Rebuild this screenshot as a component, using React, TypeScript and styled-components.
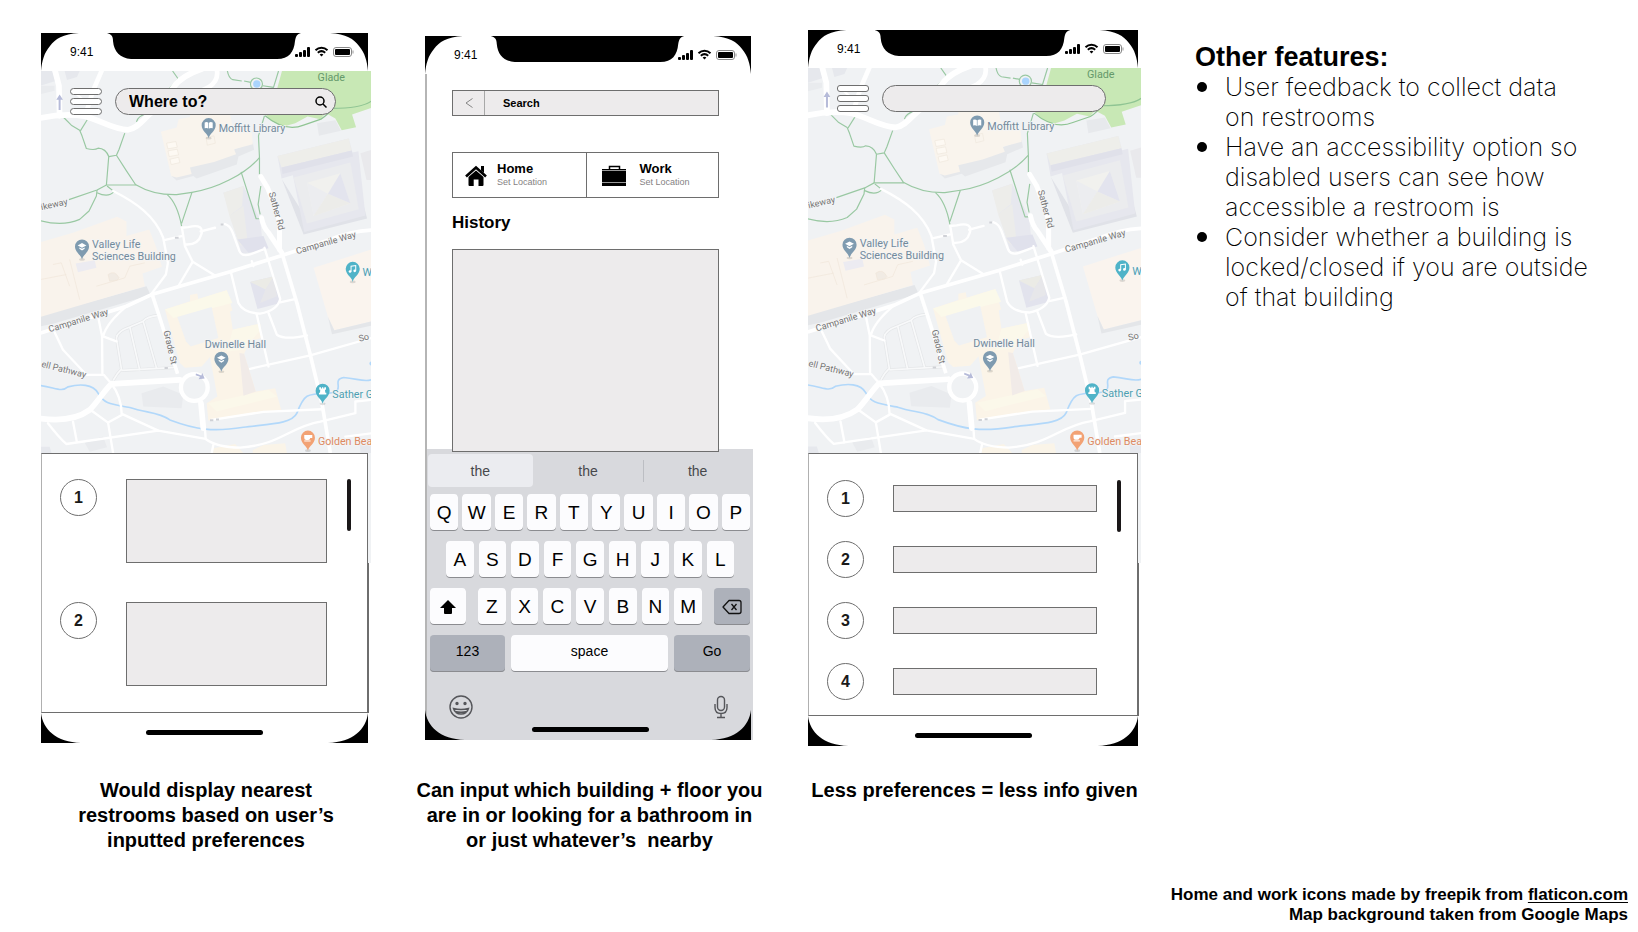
import React from "react";
import styled, { createGlobalStyle } from "styled-components";

const GlobalStyle = createGlobalStyle`
  *, *::before, *::after { box-sizing: border-box; }
  body { margin: 0; background: #fff; color: #000; font-family: "Liberation Sans", Arial, sans-serif; }
  h1, h2, p, ul, ol, figure { margin: 0; padding: 0; }
  ul, ol { list-style: none; }
  button, input { font: inherit; color: inherit; border: 0; margin: 0; padding: 0; border-radius: 0; background: none; }
`;

const line = "#6e6e6e";
const fill = "#edebec";

/* ---------- page ---------- */

const Page = styled.main`
  display: flex;
  flex-direction: column;
  min-height: 100vh;
  padding: 30px 10px 7px 41px;
`;

const Board = styled.div`
  display: grid;
  grid-template-columns: minmax(0, 330fr) minmax(0, 329fr) minmax(0, 333fr) minmax(0, 433fr);
  grid-template-rows: auto auto;
  column-gap: 54px;
  row-gap: 32px;
`;

const Screen = styled.figure`
  display: grid;
  grid-template-columns: minmax(0, 1fr);
  grid-template-rows: subgrid;
  grid-row: span 2;
  align-items: center;
`;

const Caption = styled.figcaption`
  align-self: start;
  margin: 0 -16px;
  font-size: 20px;
  line-height: 25px;
  font-weight: 700;
  text-align: center;
  white-space: pre;
`;

const Phone = styled.div`
  display: flex;
  flex-direction: column;
  padding-right: 3px;
`;

/* ---------- status bar and bezel ---------- */

const StatusBar = styled.div`
  position: relative;
  display: flex;
  justify-content: space-between;
  align-items: center;
  height: 38px;
  padding: 0 14px 0 29px;
  font-size: 12px;
`;

const Bezel = styled.svg`
  position: absolute;
  inset: 0;
  width: 100%;
  height: 100%;
`;

const StatusIcons = styled.svg`
  position: relative;
  width: 59px;
  height: 12px;
`;

const HomeArea = styled.div`
  position: relative;
  display: flex;
  justify-content: center;
  align-items: flex-start;
  height: 30px;
  padding-top: 17px;
`;

const HomeBar = styled.div`
  position: relative;
  width: 117px;
  height: 5px;
  border-radius: 3px;
  background: #000;
`;

function TopBar() {
  return (
    <StatusBar>
      <Bezel viewBox="0 0 327 38" preserveAspectRatio="none" aria-hidden="true">
        <path d="M0 0H38C22 1 14 6 9 13C3 20 1 28 0 38Z" />
        <path d="M327 0H289C305 1 313 6 318 13C324 20 326 28 327 38Z" />
        <path d="M66 0H260C256 1 255 3 254 8C253 19 248 26 236 26H90C79 25 73 19 72 8C72 3 70 1 66 0Z" />
      </Bezel>
      <span>9:41</span>
      <StatusIcons viewBox="0 0 59 12" aria-label="Signal, wifi, battery">
        <rect x="0" y="8" width="3" height="3" rx="1" />
        <rect x="4" y="6" width="3" height="5" rx="1" />
        <rect x="8" y="4" width="3" height="7" rx="1" />
        <rect x="12" y="1" width="3" height="10" rx="1" />
        <g fill="none" stroke="#000" strokeWidth="2">
          <path d="M20.5 4.2C24 .9 29 .9 32.500 4.200" />
          <path d="M22.800 6.800C25 4.800 28 4.800 30.200 6.800" />
        </g>
        <path d="M24.600 8.500Q26.500 7 28.400 8.500L26.500 10.600Z" />
        <rect x="38.500" y="1.500" width="18" height="9" rx="2.500" fill="none" stroke="#888" />
        <rect x="40" y="3" width="15" height="6" rx="1" />
        <rect x="57.500" y="4.500" width="1" height="3" fill="#999" />
      </StatusIcons>
    </StatusBar>
  );
}

function Corners() {
  return (
    <Bezel viewBox="0 0 327 31" preserveAspectRatio="none" aria-hidden="true">
      <path d="M0 0C2 17 15 30 40 31H0Z" />
      <path d="M327 0C325 17 312 30 287 31H327Z" />
    </Bezel>
  );
}

/* ---------- map screens ---------- */

const MapArea = styled.div<{ $height: number }>`
  position: relative;
  height: ${(p) => p.$height}px;
  margin-right: -3px;
  overflow: hidden;
`;

const MapDrawing = styled.svg`
  position: absolute;
  inset: 0;
  width: 100%;
  height: 100%;
  font-family: Roboto, sans-serif;
`;

const MapToolbar = styled.div`
  position: relative;
  display: flex;
  align-items: center;
  gap: 13px;
  padding: 17px 35px 0 29px;
`;

const MenuButton = styled.button`
  display: flex;
  flex-direction: column;
  gap: 3px;
  flex: none;
  width: 32px;
`;

const MenuBar = styled.span<{ $round: number }>`
  height: 7px;
  border: 1px solid ${line};
  border-radius: ${(p) => p.$round}px;
  background: #fff;
`;

const SearchPill = styled.label`
  display: flex;
  align-items: center;
  flex: 1;
  min-width: 0;
  height: 27px;
  padding: 0 8px 0 13px;
  border: 1px solid ${line};
  border-radius: 14px;
  background: ${fill};
`;

const PillInput = styled.input`
  flex: 1;
  min-width: 0;
  font-size: 16px;
  font-weight: 700;
  outline: 0;
  &::placeholder { color: #000; opacity: 1; }
`;

const SearchIcon = styled.svg`
  flex: none;
  width: 12px;
  height: 12px;
`;

function Pin({ x, y, color, children }: { x: number; y: number; color: string; children: React.ReactNode }) {
  return (
    <g transform={`translate(${x} ${y})`}>
      <ellipse cx="0" cy="38" rx="9" ry="4" fill="#000" opacity=".12" />
      <path d="M0 38C-3 24 -21 16 -21 -1A21 21 0 0 1 21 -1C21 16 3 24 0 38Z" fill={color} />
      {children}
    </g>
  );
}

const cap = (
  <g fill="#fff">
    <path d="M-13 -4L0 -11L13 -4L0 3Z" />
    <path d="M-8 2L0 6L8 2V6L0 11L-8 6Z" />
  </g>
);

function CampusMap() {
  const label = "#738a9b";
  return (
    <MapDrawing viewBox="33 156 990 1143" preserveAspectRatio="xMidYMid slice" role="img" aria-label="Campus map">
      <rect x="0" y="100" width="1100" height="1300" fill="#f0f2f4" />
      {/* park */}
      <path d="M757 150H1030V264L965 286L977 324L934 333L915 298L886 282L870 300L832 292L795 312L760 322L722 304L708 288L735 230Z" fill="#c8e8b5" />
      <path d="M860 312L915 303L932 335L866 350Z" fill="#e7e9ec" />
      {/* buildings in the corners */}
      <g fill="#e6e8ed">
        <path d="M33 156H68L78 186L33 200Z" />
        <path d="M105 156H150L142 174L112 183Z" />
        <path d="M335 1120L400 1100L460 1125L455 1165L340 1160Z" fill="#e9ebee" />
        <path d="M33 1280H60L66 1299H33Z" />
        <path d="M165 1268L220 1250L232 1282L180 1295Z" fill="#e9ebee" />
        <path d="M988 1262L1023 1255V1299H990Z" />
      </g>
      <path d="M33 200H75V215L33 225Z" fill="#e9ebee" />
      {/* library */}
      <path d="M425 470L440 484L490 470L500 478L620 436L625 412L672 392L668 370L480 440Z" fill="#e6e8eb" />
      <path d="M393 338L440 325L446 300L480 294V285H600L606 315L665 340L668 375L612 390L618 405L552 428L480 445L485 464L440 475L424 470Z" fill="#f9f4ed" />
      <g fill="#fdf9f3" stroke="#efe7dd" strokeWidth="2">
        <path d="M410 372L438 367L442 384L414 389Z" />
        <path d="M414 395L442 390L446 407L418 412Z" />
        <path d="M420 420L446 414L450 430L424 436Z" />
        <path d="M528 355L552 350L556 372L532 378Z" fill="none" />
      </g>
      {/* stacks */}
      <path d="M755 480L820 645L1010 597L1000 560L830 600Z" fill="#e0e2e8" />
      <path d="M742 410L955 358L966 400L984 396L1005 588L822 638L788 468L754 478Z" fill="#e6e7ee" />
      <path d="M742 410L955 358L964 394L754 445Z" fill="#eeeeea" />
      <path d="M754 445L964 394L968 412L757 464Z" fill="#e0e1ea" />
      <path d="M790 475L960 430L985 570L830 612Z" fill="#ebecee" />
      <path d="M830 490L930 462L960 552L850 590Z" fill="#f1f1ee" />
      <path d="M830 490L893 523L850 590Z" fill="#ecedf0" />
      <path d="M893 523L960 552L850 590Z" fill="#ecece9" />
      <path d="M893 523L930 462L960 552Z" fill="#e3e4ee" />
      <path d="M990 402L1023 392V482L1008 482Z" fill="#e9e9ec" />
      {/* slender hall */}
      <path d="M580 520L640 500L690 600L700 695L635 702Z" fill="#e7e8ef" />
      <path d="M580 520L640 500L636 560L598 590Z" fill="#ededea" />
      <path d="M598 590L640 560L655 690L628 675Z" fill="#ececea" />
      <path d="M622 660L655 700L715 686L700 650Z" fill="#e0e1ec" />
      <path d="M660 787L732 770L750 850L682 868Z" fill="#e2e3ed" />
      <path d="M660 787L732 770L706 810Z" fill="#ebebe6" />
      <path d="M706 810L732 770L740 830L690 850Z" fill="#e7e7ea" />
      {/* life sciences */}
      <path d="M33 888L350 800L362 826L70 912L33 920Z" fill="#e4e6e9" />
      <path d="M33 668L130 640L262 592L290 606V650L358 630L378 680L396 742L338 762L345 800L33 892Z" fill="#f9f3ec" />
      <g fill="none" stroke="#f0e6da" strokeWidth="2">
        <path d="M70 735L95 730L120 800M120 720L150 840M33 780L110 765" />
        <path d="M200 800L285 775L300 740L345 730" />
        <path d="M235 765Q255 750 268 775L262 782L240 785Z" fill="#f1ebe4" />
      </g>
      <path d="M138 732L195 722L200 745L145 758Z" fill="#ecebf1" />
      {/* hall on the right edge */}
      <path d="M850 745L1023 690V905L912 932L893 892Z" fill="#faf4ee" />
      <path d="M893 892L912 932L1023 905V918L905 944Z" fill="#e4e6e9" />
      {/* Dwinelle */}
      <path d="M405 870L480 845V826L502 822L505 838L590 812L607 872L600 876L608 930L690 912L693 955L660 965L642 1002L677 1115L735 1105L753 1170L535 1202L530 1150L562 1130L540 1012L515 1040L465 1044L450 1030Z" fill="#fbf4e8" />
      <path d="M405 870L590 812L607 850L430 895Z" fill="#fbf9ea" />
      <path d="M608 930L690 912L692 930L640 990L590 995Z" fill="#fbf8ea" />
      <path d="M535 1150L715 1110L740 1130L560 1175Z" fill="#fbf8ea" />
      <path d="M628 1000L642 1002L677 1115L640 1128Z" fill="#f1ebe8" />
      <path d="M442 892L545 862L565 955L482 980L468 965Z" fill="#eff1f3" />
      <path d="M550 1285L615 1272L640 1299H550ZM668 1290L700 1275L765 1270L770 1299H668Z" fill="#faf4e8" />
      {/* creek */}
      <path d="M33 1097C80 1104 95 1118 115 1101C150 1092 190 1092 205 1120C220 1150 240 1152 300 1163C350 1180 385 1175 420 1200C500 1230 550 1236 640 1222C720 1212 785 1212 800 1180C822 1120 830 1122 898 1120C950 1112 900 1080 940 1073C980 1076 1000 1088 1023 1080" fill="none" stroke="#b2d8fa" strokeWidth="5" />
      <circle cx="1023" cy="1031" r="6" fill="#b2d8fa" />
      {/* footpaths */}
      <g fill="none" stroke="#99c8a2" strokeWidth="3.500" strokeLinejoin="round">
        <path d="M428 156L445 180L405 222" />
        <path d="M592 156Q596 178 608 182L635 186M642 186L662 190M698 200L730 205L745 156" />
        <circle cx="679" cy="195" r="18" />
        <path d="M100 293L125 318L150 333L157 350L170 388Q195 394 205 387Q228 388 237 412L260 408L268 390L285 342" />
        <path d="M175 298L152 335" />
        <path d="M237 412L230 497H318L290 455L260 408" />
        <path d="M318 496C350 515 390 527 440 526L486 519C560 508 645 465 688 415L685 350L703 290" />
        <path d="M688 415V465M692 500L684 555L690 585" />
        <path d="M230 497L202 512L118 541" />
        <path d="M202 512L200 530L178 575L150 600Q100 622 33 604" />
        <path d="M202 520Q235 536 253 517L232 500" />
        <path d="M412 526Q442 552 455 620M486 519L455 612" />
        <path d="M633 458L678 598H690" />
        <path d="M320 308Q325 290 350 284" />
        <path d="M705 290Q765 340 820 318L872 300Q892 288 905 268Q990 268 1023 246" stroke="#8fc493" />
      </g>
      <circle cx="680" cy="195" r="11" fill="#aad4fd" />
      {/* parking lots */}
      <g fill="none" stroke="#e4e6e8" strokeWidth="9">
        <path d="M388 887Q350 890 340 905L300 922Q262 935 260 955L275 1048Q262 1060 250 1082M300 922L330 1052M340 905L380 1045M275 1052L440 1043" />
      </g>
      <g fill="none" stroke="#f8f9fa" strokeWidth="5">
        <path d="M388 887Q350 890 340 905L300 922Q262 935 260 955L275 1048Q262 1060 250 1082M300 922L330 1052M340 905L380 1045M275 1052L440 1043" />
      </g>
      {/* minor roads */}
      <g fill="none" stroke="#fff" strokeWidth="7" strokeLinejoin="round" strokeLinecap="round">
        <path d="M250 515C320 550 375 590 400 655L414 730L408 765L363 825" />
        <path d="M403 662L455 650" />
        <path d="M455 625L475 623C510 615 520 625 514 645Q505 678 465 675M456 625L465 680L488 727L445 800M488 727L555 768" />
        <path d="M512 636L555 625M585 614Q600 618 608 640L628 695Q635 712 660 705L700 690" />
        <path d="M603 760L625 850Q640 880 690 882Q742 872 750 838L703 685M750 848L797 838" />
        <path d="M715 880L740 945Q765 962 830 947M680 885L715 1040M660 1047L840 1007L1023 955" />
        <path d="M75 938L100 990L170 1065H222L245 1092M205 890L217 950L218 1060M290 860Q230 910 220 950L260 965" />
        <path d="M245 1092Q275 1130 276 1185L235 1208L250 1299M185 1172L235 1208M276 1182L385 1232L527 1257Q560 1282 630 1283C750 1275 780 1220 870 1205L975 1180V1145L1023 1140" />
        <path d="M130 1205L142 1268M55 1210Q90 1255 110 1272L385 1232" />
        <path d="M545 1200L700 1176L875 1168M550 1275L545 1299M945 1250L1023 1240" />
        <path d="M130 215L168 250M665 725L670 740" />
      </g>
      {/* main roads */}
      <g fill="none" stroke="#fff" strokeWidth="11" strokeLinejoin="round">
        <path d="M33 940L290 860L365 825L600 757L755 708L900 660Q960 635 1023 632" />
        <path d="M755 700L800 850L840 1005L875 1150L900 1299" />
        <path d="M367 825L385 880L443 1062" />
      </g>
      <g fill="none" stroke="#fff" strokeWidth="17" strokeLinejoin="round" strokeLinecap="round">
        <path d="M75 150L88 200L90 290" />
        <path d="M218 150L190 215L168 285" strokeWidth="14" />
        <path d="M25 298C70 288 120 284 165 291C210 302 250 332 295 332C330 326 345 290 380 270L430 205Q455 170 515 150" />
        <path d="M560 150Q568 185 535 205L500 222" strokeWidth="14" />
        <path d="M692 472L712 505L738 570L748 610V690" strokeWidth="15" />
        <path d="M694 595Q700 625 715 640L755 700" strokeWidth="15" />
        <path d="M28 1195C100 1206 150 1192 180 1170C205 1145 225 1110 245 1092L450 1080" />
        <circle cx="493" cy="1103" r="40" strokeWidth="13" />
        <path d="M513 1150L520 1225" />
      </g>
      <path d="M525 1230L527 1257" stroke="#fff" strokeWidth="7" />
      <g fill="#b6bbd9">
        <path d="M90 226L100 242H93V273H87V242H80Z" />
        <path d="M498 1061L514 1067L517 1060L524 1076L506 1078L510 1071L497 1066Z" />
      </g>
      <g fill="#cfd1d6">
        <path d="M435 652H446V658H435ZM404 1042H414V1048H404ZM540 1198H550V1204H540ZM558 1196H567V1202H558ZM572 612H580V618H572Z" />
      </g>
      {/* labels */}
      <g fontSize="32" fill={label} stroke="#f4f5f6" strokeWidth="4" paintOrder="stroke">
        <text x="566" y="340">Moffitt Library</text>
        <text x="187" y="686">Valley Life</text>
        <text x="187" y="722">Sciences Building</text>
        <text x="524" y="985">Dwinelle Hall</text>
        <text x="862" y="185" fill="#65996b" stroke="#c8e8b5">Glade</text>
        <text x="996" y="770" fill="#4c9fb2">W</text>
        <text x="906" y="1134" fill="#4c9fb2">Sather G</text>
        <text x="863" y="1274" fill="#dd8a62">Golden Bea</text>
      </g>
      <g fontSize="27" fill="#757575" stroke="#f6f7f8" strokeWidth="4" paintOrder="stroke">
        <text transform="translate(800 704) rotate(-16)">Campanile Way</text>
        <text transform="translate(60 938) rotate(-17)">Campanile Way</text>
        <text transform="translate(716 521) rotate(75)">Sather Rd</text>
        <text transform="translate(401 935) rotate(77)">Grade St</text>
        <text transform="translate(36 573) rotate(-13)">ikeway</text>
        <text transform="translate(34 1041) rotate(14)">ell Pathway</text>
        <text transform="translate(987 966) rotate(-14)">So</text>
      </g>
      <Pin x={536} y={319} color="#7f9bb0">
        <path d="M-12 -9Q-5 -12 -1 -8V9Q-5 6 -12 8ZM12 -9Q5 -12 1 -8V9Q5 6 12 8Z" fill="#fff" />
      </Pin>
      <Pin x={157} y={682} color="#7f9bb0">{cap}</Pin>
      <Pin x={574} y={1018} color="#7f9bb0">{cap}</Pin>
      <Pin x={967} y={749} color="#4fb3c8">
        <path d="M-5 7V-9L9 -11V5" fill="none" stroke="#fff" strokeWidth="3" />
        <circle cx="-8" cy="7" r="4" fill="#fff" />
        <circle cx="6" cy="5" r="4" fill="#fff" />
      </Pin>
      <Pin x={877} y={1114} color="#4fb3c8">
        <path d="M-10 -12H-5V-8H-2V-12H2V-8H5V-12H10V-4H7L8 5H11V10H-11V5H-8L-7 -4H-10Z" fill="#fff" />
      </Pin>
      <Pin x={833} y={1254} color="#f2a274">
        <path d="M-11 -9H13V0H7Q6 6 1 6H-5Q-11 6 -11 0Z" fill="#fff" />
        <path d="M-11 9H8" stroke="#fff" strokeWidth="3" />
      </Pin>
    </MapDrawing>
  );
}

/* ---------- result sheet ---------- */

const SheetWrap = styled.div`
  margin-right: -3px;
  padding-right: 3px;
  background:
    linear-gradient(#f0f2f4, #f0f2f4) right top / 3px 110px no-repeat,
    linear-gradient(${line}, ${line}) right 2px bottom / 1px calc(100% - 110px) no-repeat;
`;

const Sheet = styled.div<{ $height: number; $inset: number }>`
  display: flex;
  justify-content: space-between;
  align-items: flex-start;
  height: ${(p) => p.$height}px;
  padding: ${(p) => p.$inset}px 16px 0 18px;
  border: 1px solid ${line};
  border-left-color: #b0b0b0;
  background: #fff;
`;

const Results = styled.ol<{ $gap: number }>`
  display: flex;
  flex-direction: column;
  flex: 1;
  gap: ${(p) => p.$gap}px;
  margin-right: 20px;
`;

const Result = styled.li<{ $top?: boolean }>`
  display: flex;
  align-items: ${(p) => (p.$top ? "flex-start" : "center")};
  gap: 29px;
`;

const Rank = styled.span`
  display: flex;
  align-items: center;
  justify-content: center;
  flex: none;
  width: 37px;
  height: 37px;
  border: 1px solid ${line};
  border-radius: 50%;
  color: #1a1a1a;
  font-size: 16px;
  font-weight: 700;
`;

const ResultBox = styled.div<{ $height: number }>`
  flex: 1;
  height: ${(p) => p.$height}px;
  border: 1px solid ${line};
  background: ${fill};
`;

const ScrollThumb = styled.div`
  width: 4px;
  height: 52px;
  border-radius: 2px;
  background: #1a1718;
`;

/* ---------- search screen ---------- */

const SearchBody = styled.div`
  display: flex;
  flex-direction: column;
  height: 375px;
  padding: 16px 32px 0 25px;
  border-left: 2px solid #b5b5b5;
`;

const SearchBox = styled.div`
  display: flex;
  flex: none;
  height: 26px;
  border: 1px solid ${line};
  background: ${fill};
`;

const BackButton = styled.button`
  display: flex;
  align-items: center;
  justify-content: center;
  flex: none;
  width: 32px;
  border-right: 1px solid #a8a8a8;
`;

const SearchInput = styled.input`
  flex: 1;
  min-width: 0;
  padding-left: 18px;
  font-size: 11px;
  font-weight: 700;
  outline: 0;
  &::placeholder { color: #000; opacity: 1; }
`;

const Places = styled.div`
  display: grid;
  grid-template-columns: 1fr 1fr;
  flex: none;
  height: 46px;
  margin-top: 36px;
  border: 1px solid ${line};
`;

const Place = styled.button<{ $gap: number; $inset: number }>`
  display: flex;
  align-items: center;
  gap: ${(p) => p.$gap}px;
  padding-left: ${(p) => p.$inset}px;
  text-align: left;
  & + & { border-left: 1px solid ${line}; }
`;

const PlaceName = styled.strong`
  display: block;
  font-size: 13px;
  line-height: 14px;
`;

const PlaceHint = styled.span`
  display: block;
  color: #858283;
  font-size: 9px;
  line-height: 12px;
`;

const HistoryTitle = styled.h2`
  margin-top: 15px;
  font-size: 17px;
  line-height: 20px;
`;

const HistoryBox = styled.div`
  position: relative;
  z-index: 1;
  flex: none;
  height: 203px;
  margin-top: 16px;
  border: 1px solid ${line};
  background: ${fill};
`;

/* ---------- keyboard ---------- */

const Keyboard = styled.div`
  position: relative;
  display: flex;
  flex-direction: column;
  height: 291px;
  margin-right: -2px;
  border-left: 2px solid #b5b5b5;
  background: #d8d9dd;
`;

const Suggestions = styled.div`
  display: grid;
  grid-template-columns: 105fr 111fr 109fr;
  flex: none;
  height: 33px;
  margin: 5px 1px 7px;
`;

const Suggestion = styled.button<{ $active?: boolean; $divided?: boolean }>`
  border-radius: 4px;
  background: ${(p) =>
    p.$active
      ? "#ebecf0"
      : p.$divided
        ? "linear-gradient(#bcbec3, #bcbec3) left center / 1px 22px no-repeat"
        : "none"};
  color: #47484b;
  font-size: 14px;
`;

const KeyRow = styled.div<{ $inset?: number; $gap?: number }>`
  display: flex;
  gap: ${(p) => p.$gap ?? 4}px;
  flex: none;
  padding: 0 ${(p) => p.$inset ?? 3}px;
  margin-bottom: 10px;
`;

const Letters = styled.div`
  display: flex;
  gap: 5px;
  flex: 1;
`;

const Key = styled.button<{ $width?: number; $dark?: boolean; $word?: boolean }>`
  display: flex;
  align-items: center;
  justify-content: center;
  flex: ${(p) => (p.$width ? `0 0 ${p.$width}px` : "1 1 0")};
  min-width: 0;
  height: 37px;
  padding-bottom: ${(p) => (p.$word ? 6 : 0)}px;
  border-radius: 4px;
  background: ${(p) => (p.$dark ? "#adb1ba" : "#fcfcfe")};
  box-shadow: inset 0 -1px 0 #8b8c90;
  font-size: ${(p) => (p.$word ? 14 : 19)}px;
`;

const KeyboardFoot = styled.div`
  display: flex;
  justify-content: space-between;
  padding: 13px 25px 0 22px;
`;

const FootButton = styled.button`
  display: flex;
`;

const KeyboardBottom = styled.div`
  position: absolute;
  left: -2px;
  right: 2px;
  bottom: 0;
  height: 30px;
`;

const KeyboardHome = styled(HomeBar)`
  position: absolute;
  left: 0;
  right: 0;
  bottom: 8px;
  margin: auto;
`;

/* ---------- notes and credits ---------- */

const Notes = styled.section`
  grid-row: 1 / span 2;
  grid-column: 4;
  padding-top: 12px;
  font-family: Inter, "Liberation Sans", sans-serif;
  font-weight: 250;
  font-size: 25px;
  line-height: 30px;
`;

const NotesTitle = styled.h1`
  font-family: "Liberation Sans", Arial, sans-serif;
  font-size: 27px;
  line-height: 30px;
`;

const Note = styled.li`
  display: grid;
  grid-template-columns: 30px 1fr;
  &::before {
    content: "";
    width: 10px;
    height: 10px;
    margin: 10px 0 0 2px;
    border-radius: 50%;
    background: #000;
  }
`;

const NoteText = styled.p`
  white-space: pre-line;
`;

const Credits = styled.footer`
  margin-top: auto;
  font-size: 17px;
  line-height: 20px;
  font-weight: 700;
  text-align: right;
`;

const CreditLink = styled.a`
  color: inherit;
  text-decoration-thickness: 1px;
  text-underline-offset: 2px;
`;

const notes = [
  "User feedback to collect data\non restrooms",
  "Have an accessibility option so\ndisabled users can see how\naccessible a restroom is",
  "Consider whether a building is\nlocked/closed if you are outside\nof that building",
];

type MapScreenProps = {
  mapHeight: number;
  sheetHeight: number;
  sheetInset: number;
  menuRound: number;
  placeholder?: string;
  ranks: number[];
  gap: number;
  boxHeight: number;
  caption: string;
};

function MapScreen(p: MapScreenProps) {
  return (
    <Screen>
      <Phone>
        <TopBar />
        <MapArea $height={p.mapHeight}>
          <CampusMap />
          <MapToolbar>
            <MenuButton aria-label="Menu">
              <MenuBar $round={p.menuRound} />
              <MenuBar $round={p.menuRound} />
              <MenuBar $round={p.menuRound} />
            </MenuButton>
            <SearchPill>
              <PillInput aria-label="Destination" placeholder={p.placeholder} />
              {p.placeholder && (
                <SearchIcon viewBox="0 0 12 12" fill="none" stroke="#000" strokeWidth="1.500" aria-hidden="true">
                  <circle cx="5" cy="5" r="4" />
                  <path d="M8 8L11.500 11.500" />
                </SearchIcon>
              )}
            </SearchPill>
          </MapToolbar>
        </MapArea>
        <SheetWrap>
          <Sheet $height={p.sheetHeight} $inset={p.sheetInset}>
            <Results $gap={p.gap}>
              {p.ranks.map((n) => (
                <Result key={n} $top={p.boxHeight > 37}>
                  <Rank>{n}</Rank>
                  <ResultBox $height={p.boxHeight} />
                </Result>
              ))}
            </Results>
            <ScrollThumb />
          </Sheet>
        </SheetWrap>
        <HomeArea>
          <Corners />
          <HomeBar />
        </HomeArea>
      </Phone>
      <Caption>{p.caption}</Caption>
    </Screen>
  );
}

function SearchScreen() {
  return (
    <Screen>
      <Phone>
        <TopBar />
        <SearchBody>
          <SearchBox>
            <BackButton aria-label="Back">
              <svg width="8" height="10" viewBox="0 0 8 10" fill="none" stroke="#858585">
                <path d="M7.500 .500L1 5L7.500 9.500" />
              </svg>
            </BackButton>
            <SearchInput aria-label="Search" placeholder="Search" />
          </SearchBox>
          <Places>
            <Place $inset={12} $gap={10}>
              <svg width="22" height="21" viewBox="0 0 22 21" aria-hidden="true">
                <path d="M1 11.500L11 2.500L21 11.500" fill="none" stroke="#000" strokeWidth="2.600" />
                <path d="M16 1H19V8L16 5.500Z" />
                <path d="M3.500 12L11 5.500L18.500 12V20Q18.500 21 17.500 21H13.500V14.500H8.700V21H4.500Q3.500 21 3.500 20Z" />
              </svg>
              <span>
                <PlaceName>Home</PlaceName>
                <PlaceHint>Set Location</PlaceHint>
              </span>
            </Place>
            <Place $inset={15} $gap={14}>
              <svg width="24" height="21" viewBox="0 0 24 21" aria-hidden="true">
                <path d="M7.500 5V1.500H17.500V5" fill="none" stroke="#000" strokeWidth="1.500" />
                <path d="M0 4H24V21H0Z" />
                <path d="M0 5.500H24M0 17.500H24" stroke="#999" />
              </svg>
              <span>
                <PlaceName>Work</PlaceName>
                <PlaceHint>Set Location</PlaceHint>
              </span>
            </Place>
          </Places>
          <HistoryTitle>History</HistoryTitle>
          <HistoryBox />
        </SearchBody>
        <Keyboard>
          <Suggestions>
            <Suggestion $active>the</Suggestion>
            <Suggestion>the</Suggestion>
            <Suggestion $divided>the</Suggestion>
          </Suggestions>
          <KeyRow>
            {"QWERTYUIOP".split("").map((k) => <Key key={k}>{k}</Key>)}
          </KeyRow>
          <KeyRow $inset={19} $gap={5}>
            {"ASDFGHJKL".split("").map((k) => <Key key={k}>{k}</Key>)}
          </KeyRow>
          <KeyRow $gap={12}>
            <Key $width={36} aria-label="Shift">
              <svg width="18" height="16" viewBox="0 0 18 16"><path d="M9 1L17 9H13V14Q13 15 12 15H6Q5 15 5 14V9H1Z" /></svg>
            </Key>
            <Letters>
              {"ZXCVBNM".split("").map((k) => <Key key={k}>{k}</Key>)}
            </Letters>
            <Key $width={36} $dark aria-label="Delete">
              <svg width="20" height="16" viewBox="0 0 20 16" fill="none" stroke="#111" strokeWidth="1.300">
                <path d="M7 1.500H17Q19 1.500 19 3.500V12.500Q19 14.500 17 14.500H7L1 8Z" strokeLinejoin="round" />
                <path d="M9.500 5L14.500 11M14.500 5L9.500 11" />
              </svg>
            </Key>
          </KeyRow>
          <KeyRow $gap={6}>
            <Key $width={75} $dark $word>123</Key>
            <Key $word>space</Key>
            <Key $width={76} $dark $word>Go</Key>
          </KeyRow>
          <KeyboardFoot>
            <FootButton aria-label="Emoji">
              <svg width="24" height="24" viewBox="0 0 24 24" fill="none" stroke="#55565a" strokeWidth="1.400">
                <circle cx="12" cy="12" r="11" />
                <path d="M4.500 13.500Q12 15.500 19.500 13.500Q18 19 12 19Q6 19 4.500 13.500ZM6 16.500Q12 18 18 16.500" />
                <circle cx="8" cy="8.500" r="1" fill="#55565a" />
                <circle cx="16" cy="8.500" r="1" fill="#55565a" />
              </svg>
            </FootButton>
            <FootButton aria-label="Dictate">
              <svg width="14" height="24" viewBox="0 0 14 24" fill="none" stroke="#55565a" strokeWidth="1.400">
                <rect x="3.500" y="1.500" width="7" height="14" rx="3.500" />
                <path d="M1 9V12.500Q1 18.500 7 18.500Q13 18.500 13 12.500V9M7 18.500V22.500M3 22.500H11" />
              </svg>
            </FootButton>
          </KeyboardFoot>
          <KeyboardBottom><Corners /></KeyboardBottom>
          <KeyboardHome />
        </Keyboard>
      </Phone>
      <Caption>{"Can input which building + floor you\nare in or looking for a bathroom in\nor just whatever’s  nearby"}</Caption>
    </Screen>
  );
}

export default function App() {
  return (
    <Page>
      <GlobalStyle />
      <Board>
        <MapScreen
          mapHeight={382}
          sheetHeight={260}
          sheetInset={25}
          menuRound={4}
          placeholder="Where to?"
          ranks={[1, 2]}
          gap={39}
          boxHeight={84}
          caption={"Would display nearest\nrestrooms based on user’s\ninputted preferences"}
        />
        <SearchScreen />
        <MapScreen
          mapHeight={385}
          sheetHeight={263}
          sheetInset={26}
          menuRound={3}
          ranks={[1, 2, 3, 4]}
          gap={24}
          boxHeight={27}
          caption="Less preferences = less info given"
        />
        <Notes>
          <NotesTitle>Other features:</NotesTitle>
          <ul>
            {notes.map((n) => (
              <Note key={n}><NoteText>{n}</NoteText></Note>
            ))}
          </ul>
        </Notes>
      </Board>
      <Credits>
        Home and work icons made by freepik from <CreditLink href="#flaticon">flaticon.com</CreditLink>
        <br />
        Map background taken from Google Maps
      </Credits>
    </Page>
  );
}
